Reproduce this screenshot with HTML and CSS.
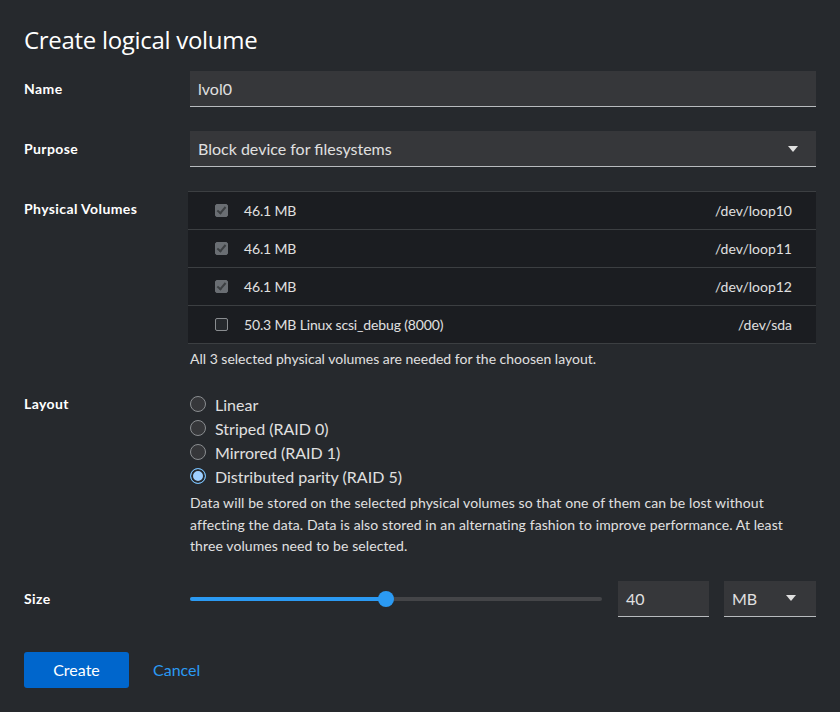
FILE: index.html
```html
<!DOCTYPE html>
<html>
<head>
<meta charset="utf-8">
<link rel="stylesheet" href="styles.css">
</head>
<body>
<div class="dialog">
  <h1 class="title">Create logical volume</h1>
  <div class="form">
    <div class="label">Name</div>
    <div class="field"><div class="input">lvol0</div></div>

    <div class="label">Purpose</div>
    <div class="field"><div class="input select"><span>Block device for filesystems</span><span class="caret"></span></div></div>

    <div class="label">Physical Volumes</div>
    <div class="field">
      <div class="table">
        <div class="row"><span class="cb checked"></span><span class="desc">46.1 MB</span><span class="dev">/dev/loop10</span></div>
        <div class="row"><span class="cb checked"></span><span class="desc">46.1 MB</span><span class="dev">/dev/loop11</span></div>
        <div class="row"><span class="cb checked"></span><span class="desc">46.1 MB</span><span class="dev">/dev/loop12</span></div>
        <div class="row"><span class="cb"></span><span class="desc">50.3 MB Linux scsi_debug (8000)</span><span class="dev">/dev/sda</span></div>
      </div>
      <div class="helper">All 3 selected physical volumes are needed for the choosen layout.</div>
    </div>

    <div class="label label-flush">Layout</div>
    <div class="field">
      <div class="radios">
        <div class="radio"><span class="rb"></span>Linear</div>
        <div class="radio"><span class="rb"></span>Striped (RAID 0)</div>
        <div class="radio"><span class="rb"></span>Mirrored (RAID 1)</div>
        <div class="radio"><span class="rb on"></span>Distributed parity (RAID 5)</div>
      </div>
      <p class="explain">Data will be stored on the selected physical volumes so that one of them can be lost without affecting the data. Data is also stored in an alternating fashion to improve performance. At least three volumes need to be selected.</p>
    </div>

    <div class="label">Size</div>
    <div class="field size-row">
      <div class="slider"><div class="track"><div class="fill" style="width:47.6%"></div><div class="thumb" style="left:47.6%"></div></div></div>
      <div class="input num">40</div>
      <div class="input select unit"><span>MB</span><span class="caret"></span></div>
    </div>
  </div>
  <div class="footer">
    <button class="btn-primary">Create</button>
    <a class="link">Cancel</a>
  </div>
</div>
</body>
</html>
```
FILE: styles.css
```css
html, body {
  margin: 0;
  background: #26292d;
}
body {
  font-family: Lato, "Open Sans", sans-serif;
  color: #e0e0e0;
  width: 840px;
  height: 712px;
  overflow: hidden;
}
.dialog {
  padding: 24px 24px 0 24px;
}
.title {
  margin: 0 0 15px 0;
  font-family: "Open Sans", Lato, sans-serif;
  font-weight: 400;
  font-size: 24px;
  line-height: 32px;
  color: #ffffff;
  letter-spacing: -0.3px;
}
.form {
  display: grid;
  grid-template-columns: 150px 1fr;
  column-gap: 16px;
  row-gap: 24px;
}
.label {
  font-size: 14px;
  font-weight: 700;
  color: #ffffff;
  line-height: 24px;
  padding-top: 6px;
  letter-spacing: 0.4px;
}
.label-flush { padding-top: 0; }
.field { min-width: 0; }
.input {
  box-sizing: border-box;
  height: 36px;
  background: #36373a;
  border-bottom: 1px solid #b8bbbe;
  padding: 0 8px;
  font-size: 16px;
  line-height: 35px;
  color: #e0e0e0;
}
.select {
  display: flex;
  justify-content: space-between;
  align-items: center;
}
.caret {
  width: 0;
  height: 0;
  border-left: 5.5px solid transparent;
  border-right: 5.5px solid transparent;
  border-top: 6px solid #e0e0e0;
  margin-right: 10px;
}
.table {
  background: #1b1d21;
  border-top: 1px solid #3c3f42;
  margin-left: -2px;
}
.row {
  box-sizing: border-box;
  height: 38px;
  display: flex;
  align-items: center;
  padding: 0 24px 0 27px;
  border-bottom: 1px solid #3c3f42;
  font-size: 14px;
}
.cb {
  width: 11px;
  height: 11px;
  border: 1px solid #8a8d90;
  border-radius: 2px;
  background: #26292d;
  margin-right: 16px;
  position: relative;
  flex: none;
}
.cb.checked {
  background: #6a6e73;
  border-color: #6a6e73;
}
.cb.checked::after {
  content: "";
  position: absolute;
  left: 3px;
  top: 0px;
  width: 3px;
  height: 7px;
  border-right: 2px solid #3c3f42;
  border-bottom: 2px solid #3c3f42;
  transform: rotate(40deg);
}
.desc { flex: 1; color: #e0e0e0; letter-spacing: -0.15px; }
.dev { color: #e0e0e0; }
.helper {
  font-size: 14px;
  line-height: 18px;
  margin-top: 6px;
  color: #e0e0e0;
}
.radios { display: flex; flex-direction: column; }
.radio {
  display: flex;
  align-items: center;
  height: 24px;
  font-size: 16px;
  color: #e0e0e0;
}
.rb {
  box-sizing: border-box;
  width: 16px;
  height: 16px;
  border-radius: 50%;
  border: 1px solid #8a8d90;
  background: #36373a;
  margin-right: 9px;
  flex: none;
}
.rb.on {
  border: 1px solid #73bcf7;
  background: #9ecfff;
  box-shadow: inset 0 0 0 2px #26292d;
}
.explain {
  margin: 4px 0 0 0;
  max-width: 600px;
  font-size: 14px;
  line-height: 21.5px;
  color: #e0e0e0;
  letter-spacing: 0.1px;
}
.size-row {
  display: flex;
  align-items: center;
  gap: 16px;
}
.slider {
  flex: 1;
  height: 36px;
  display: flex;
  align-items: center;
}
.track {
  position: relative;
  width: 100%;
  height: 4px;
  border-radius: 2px;
  background: #444548;
}
.fill {
  height: 4px;
  border-radius: 2px;
  background: #2b9af3;
}
.thumb {
  position: absolute;
  top: 50%;
  width: 16px;
  height: 16px;
  border-radius: 50%;
  background: #2b9af3;
  transform: translate(-50%, -50%);
}
.num { width: 91px; flex: none; }
.unit { width: 92px; flex: none; margin-left: -1px; }
.unit .caret { margin-right: 12px; }
.footer {
  display: flex;
  align-items: center;
  gap: 24px;
  margin-top: 35px;
}
.btn-primary {
  font-family: inherit;
  font-size: 16px;
  height: 36px;
  width: 105px;
  border: none;
  border-radius: 3px;
  background: #0066cc;
  color: #ffffff;
  padding: 0;
}
.link {
  font-size: 16px;
  color: #2b9af3;
}
```
